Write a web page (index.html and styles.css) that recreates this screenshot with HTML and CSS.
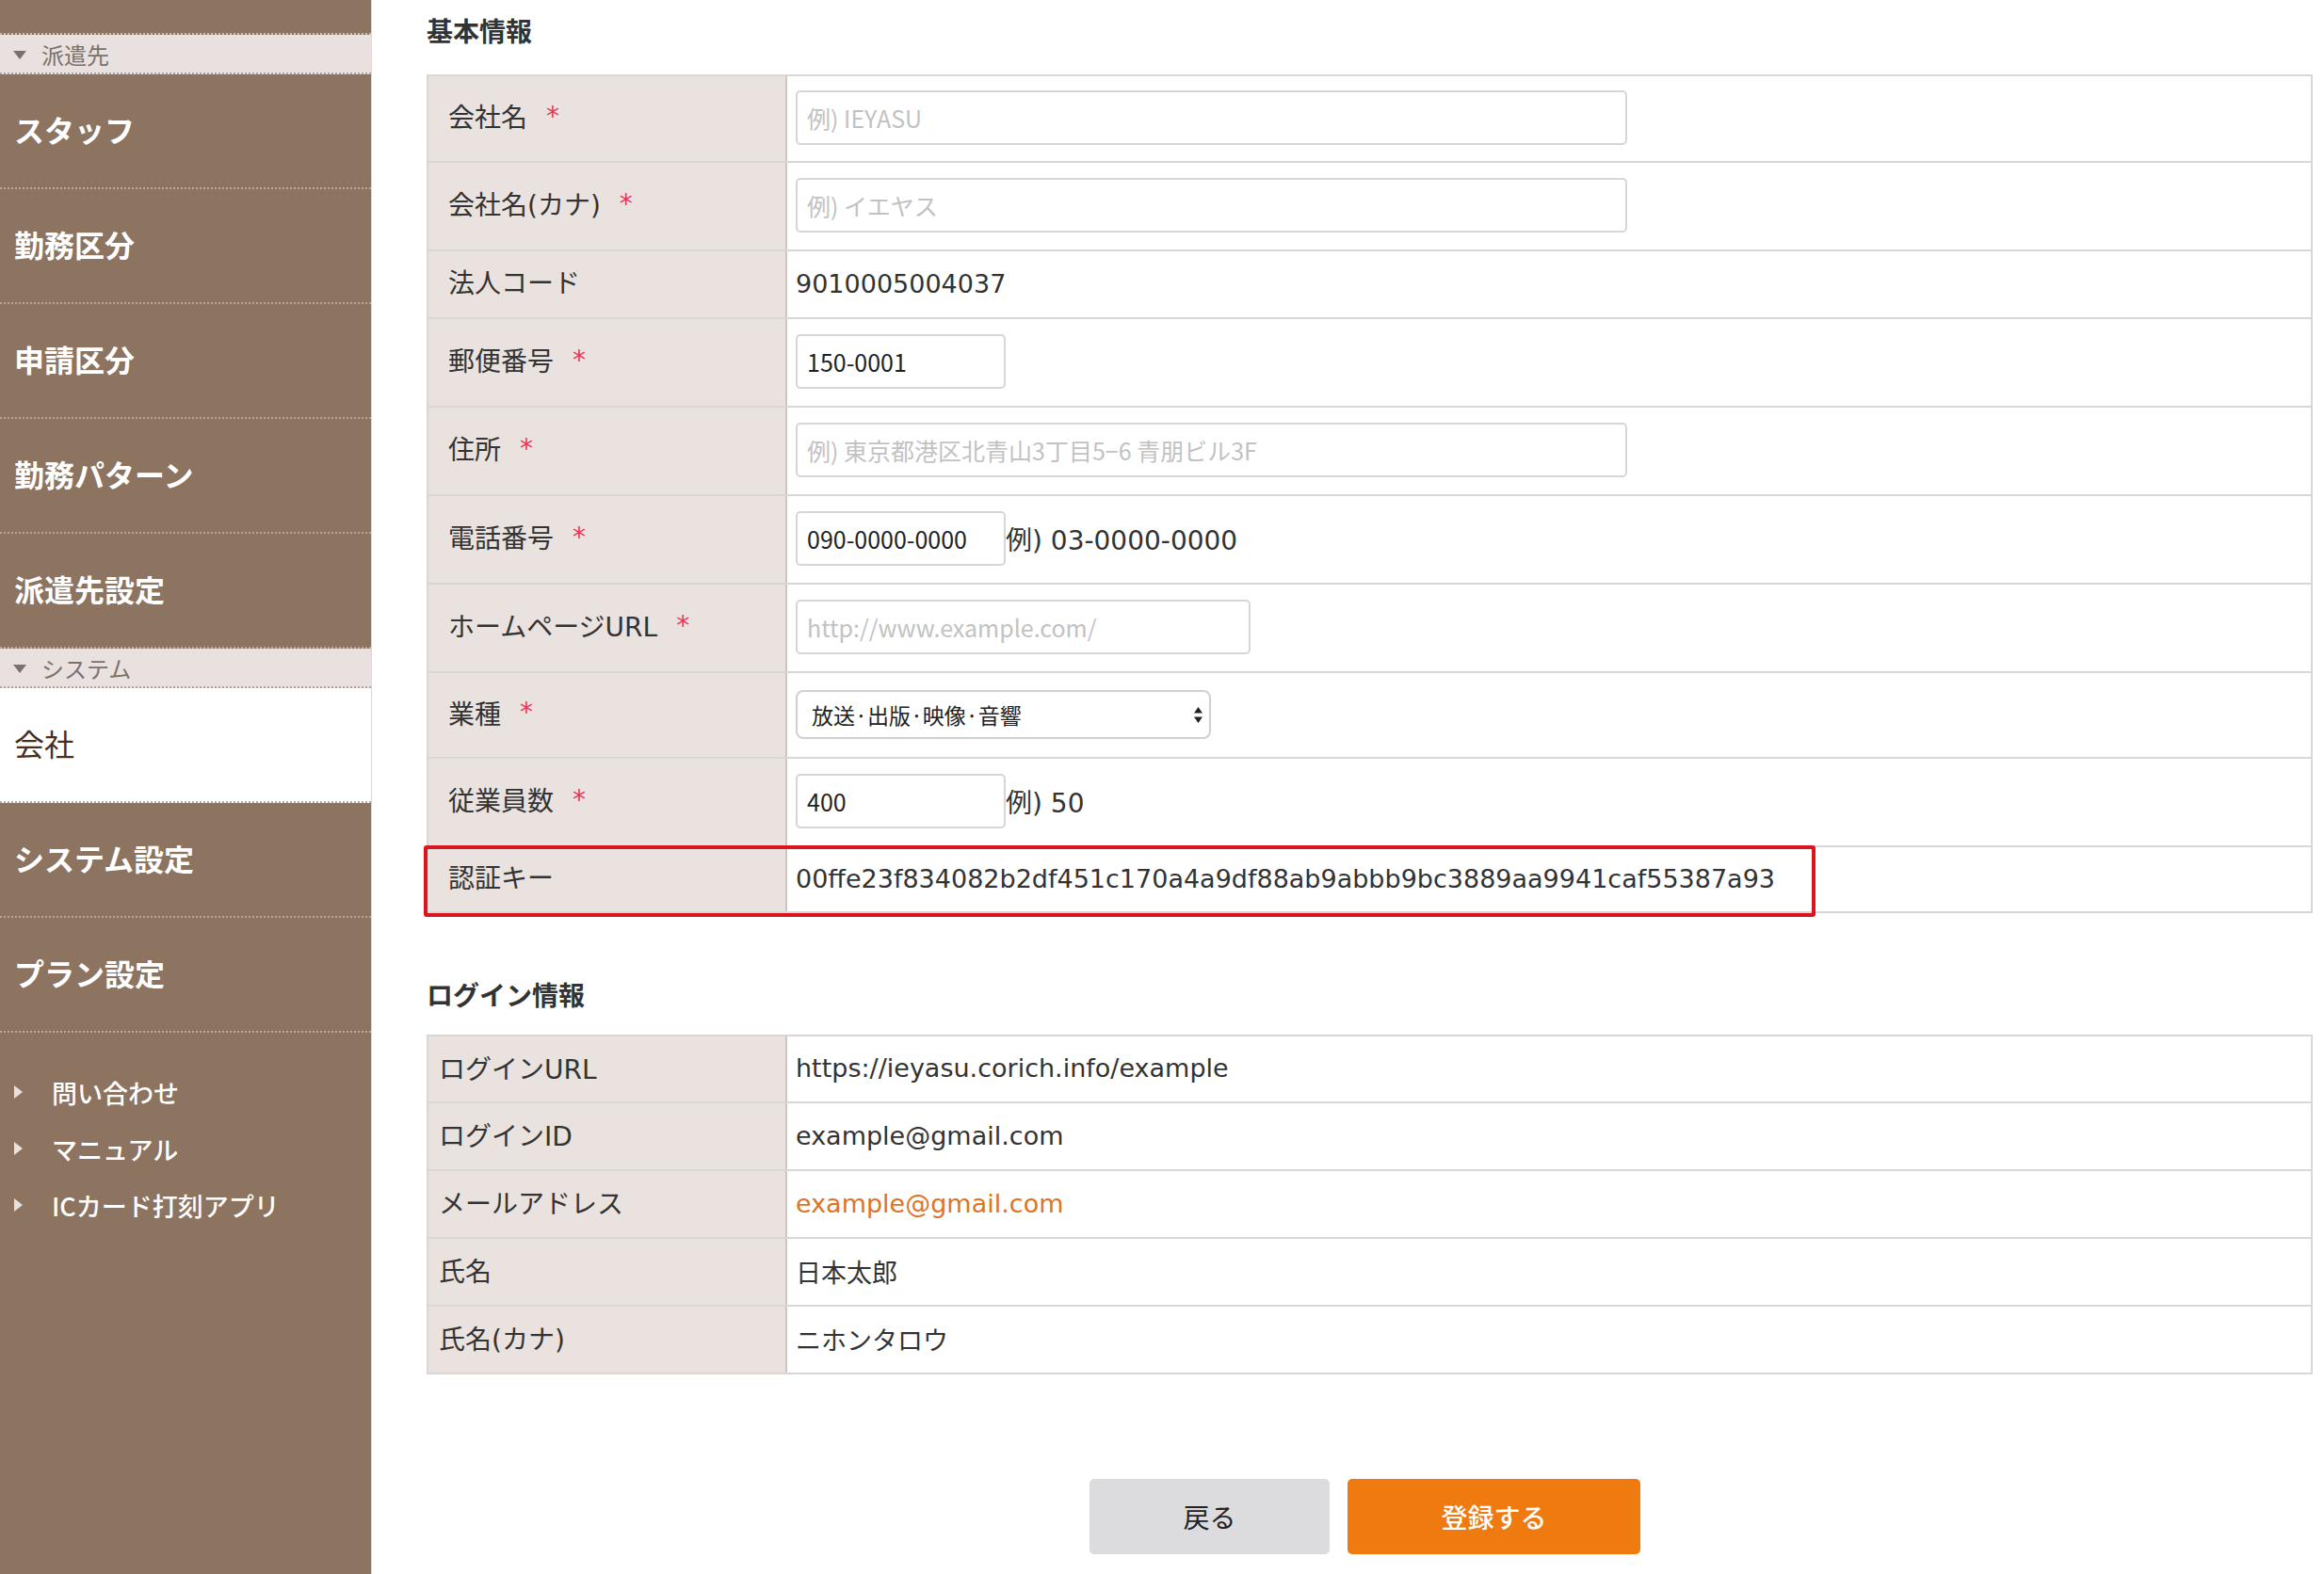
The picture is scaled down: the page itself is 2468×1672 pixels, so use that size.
FILE: index.html
```html
<!DOCTYPE html>
<html lang="ja">
<head>
<meta charset="utf-8">
<title>会社</title>
<link rel="stylesheet" href="styles.css">
</head>
<body>
<aside class="sidebar">
  <div class="sb-cut"></div>
  <div class="sb-head"><svg class="tri-down" width="14" height="9" viewBox="0 0 14 9"><polygon points="0,0 14,0 7,9"/></svg><span>派遣先</span></div>
  <a class="sb-item">スタッフ</a>
  <a class="sb-item">勤務区分</a>
  <a class="sb-item">申請区分</a>
  <a class="sb-item">勤務パターン</a>
  <a class="sb-item">派遣先設定</a>
  <div class="sb-head"><svg class="tri-down" width="14" height="9" viewBox="0 0 14 9"><polygon points="0,0 14,0 7,9"/></svg><span>システム</span></div>
  <a class="sb-item active">会社</a>
  <a class="sb-item">システム設定</a>
  <a class="sb-item">プラン設定</a>
  <ul class="sb-links">
    <li><svg class="tri-right" width="9" height="14" viewBox="0 0 9 14"><polygon points="0,0 9,7 0,14"/></svg><span>問い合わせ</span></li>
    <li><svg class="tri-right" width="9" height="14" viewBox="0 0 9 14"><polygon points="0,0 9,7 0,14"/></svg><span>マニュアル</span></li>
    <li><svg class="tri-right" width="9" height="14" viewBox="0 0 9 14"><polygon points="0,0 9,7 0,14"/></svg><span>ICカード打刻アプリ</span></li>
  </ul>
</aside>

<main class="main">
  <h2 class="sec-title">基本情報</h2>
  <div class="form-table">
    <div class="row first">
      <div class="lbl">会社名<span class="req">*</span></div>
      <div class="val"><input class="inp inp-l" type="text" placeholder="例) IEYASU"></div>
    </div>
    <div class="row">
      <div class="lbl">会社名(カナ)<span class="req">*</span></div>
      <div class="val"><input class="inp inp-l" type="text" placeholder="例) イエヤス"></div>
    </div>
    <div class="row short">
      <div class="lbl">法人コード</div>
      <div class="val">9010005004037</div>
    </div>
    <div class="row">
      <div class="lbl">郵便番号<span class="req">*</span></div>
      <div class="val"><input class="inp inp-s" type="text" value="150-0001"></div>
    </div>
    <div class="row">
      <div class="lbl">住所<span class="req">*</span></div>
      <div class="val"><input class="inp inp-l" type="text" placeholder="例) 東京都港区北青山3丁目5−6 青朋ビル3F"></div>
    </div>
    <div class="row">
      <div class="lbl">電話番号<span class="req">*</span></div>
      <div class="val"><input class="inp inp-s" type="text" value="090-0000-0000"><span class="hint">例) 03-0000-0000</span></div>
    </div>
    <div class="row">
      <div class="lbl">ホームページURL<span class="req">*</span></div>
      <div class="val"><input class="inp inp-m" type="text" placeholder="http://www.example.com/"></div>
    </div>
    <div class="row sel">
      <div class="lbl">業種<span class="req">*</span></div>
      <div class="val">
        <div class="sel-wrap">
          <select class="select"><option>放送·出版·映像·音響</option></select>
          <svg class="sel-arrows" width="9" height="17" viewBox="0 0 9 17"><polygon points="4.5,0 9,6.5 0,6.5"/><polygon points="0,10.5 9,10.5 4.5,17"/></svg>
        </div>
      </div>
    </div>
    <div class="row">
      <div class="lbl">従業員数<span class="req">*</span></div>
      <div class="val"><input class="inp inp-s" type="text" value="400"><span class="hint">例) 50</span></div>
    </div>
    <div class="row short key">
      <div class="lbl">認証キー</div>
      <div class="val">00ffe23f834082b2df451c170a4a9df88ab9abbb9bc3889aa9941caf55387a93</div>
    </div>
  </div>

  <h2 class="sec-title second">ログイン情報</h2>
  <div class="form-table login">
    <div class="row short first">
      <div class="lbl">ログインURL</div>
      <div class="val">https://ieyasu.corich.info/example</div>
    </div>
    <div class="row short">
      <div class="lbl">ログインID</div>
      <div class="val">example@gmail.com</div>
    </div>
    <div class="row short">
      <div class="lbl">メールアドレス</div>
      <div class="val"><a class="mail">example@gmail.com</a></div>
    </div>
    <div class="row short">
      <div class="lbl">氏名</div>
      <div class="val">日本太郎</div>
    </div>
    <div class="row short">
      <div class="lbl">氏名(カナ)</div>
      <div class="val">ニホンタロウ</div>
    </div>
  </div>

  <div class="actions">
    <button class="btn btn-back" type="button">戻る</button>
    <button class="btn btn-submit" type="button">登録する</button>
  </div>
</main>
</body>
</html>
```

FILE: styles.css
```css
* { box-sizing: border-box; }
html, body { margin: 0; padding: 0; }
body {
  display: flex;
  min-height: 1672px;
  background: #fff;
  color: #333;
  font-family: "DejaVu Sans", "Noto Sans CJK JP", sans-serif;
}

/* ---------- sidebar ---------- */
.sidebar {
  width: 395px;
  flex: none;
  background: #8c7461;
  border-right: 1px solid #ddd8d5;
  font-family: "Noto Sans CJK JP", sans-serif;
}
.sb-cut {
  height: 37px;
  border-bottom: 2px dotted #c9beb6;
}
.sb-head {
  height: 42px;
  background: #e9e1df;
  border-bottom: 2px dotted #b1a59d;
  display: flex;
  align-items: center;
  padding-left: 14px;
  font-size: 24px;
  color: #7b716b;
}
.tri-down { fill: #7b716b; margin-right: 16px; margin-top: 2px; }
.sb-item {
  display: flex;
  align-items: center;
  height: 122px;
  padding-left: 15px;
  padding-bottom: 5px;
  border-bottom: 2px dotted #b6a79c;
  color: #fff;
  font-size: 32px;
  font-weight: bold;
  text-decoration: none;
}
.sb-item.active {
  background: #fff;
  color: #4b2f1c;
  font-weight: normal;
}
.sb-links {
  list-style: none;
  margin: 0;
  padding: 33px 0 0 0;
}
.sb-links li {
  display: flex;
  align-items: center;
  height: 60px;
  padding-left: 15px;
  color: #fff;
  font-size: 27px;
  font-weight: 500;
}
.tri-right { fill: #e9e1dc; margin-right: 31px; }

/* ---------- main ---------- */
.main {
  flex: 1;
  padding: 0 12px 0 58px;
}
.sec-title {
  margin: 0;
  height: 79px;
  padding-top: 11px;
  font-family: "Noto Sans CJK JP", sans-serif;
  font-size: 28px;
  line-height: 42px;
  font-weight: bold;
  color: #333;
}
.sec-title.second {
  margin-top: 65px;
  height: 64px;
  padding-top: 0;
}

.form-table {
  border: 2px solid #dbd6d4;
  border-bottom: none;
}
.row {
  display: grid;
  grid-template-columns: 381px 1fr;
  height: 94px;
  border-bottom: 2px solid #dbd6d4;
}
.row.first { height: 92px; }
.row.short { height: 72px; }
.row.short.first { height: 71px; }
.row.sel { height: 91px; }
.row.key { height: 70px; position: relative; }
.row.key::after {
  content: "";
  position: absolute;
  left: -5px;
  top: -2px;
  width: 1470px;
  height: 68px;
  border: 4px solid #d8161d;
  border-radius: 3px;
  pointer-events: none;
}

.lbl {
  display: flex;
  align-items: center;
  background: #e9e2df;
  border-right: 2px solid #cdc5c1;
  padding-left: 21px;
  padding-bottom: 6px;
  font-size: 28px;
  color: #333;
}
.login .lbl { padding-left: 11px; padding-bottom: 4px; }
.req {
  color: #e8385f;
  margin-left: 20px;
  font-size: 28px;
}
.val {
  display: flex;
  align-items: center;
  padding-left: 9px;
  padding-bottom: 2px;
  font-size: 27px;
  color: #333;
}
.mail { color: #e07326; text-decoration: none; }
.hint { font-size: 28px; }

.inp {
  height: 58px;
  border: 2px solid #d6d6d6;
  border-radius: 5px;
  padding: 0 10px;
  font-family: "Noto Sans CJK JP", sans-serif;
  font-size: 25px;
  color: #222;
  background: #fff;
  outline: none;
}
.inp::placeholder { color: #c2c2c2; }
.inp-l { width: 883px; }
.inp-m { width: 483px; }
.inp-s { width: 223px; }

.sel-wrap {
  position: relative;
  width: 441px;
  height: 52px;
}
.select {
  width: 100%;
  height: 100%;
  appearance: none;
  -webkit-appearance: none;
  border: 2px solid #d0d0d0;
  border-radius: 8px;
  background: #fff;
  padding-left: 15px;
  font-family: "Noto Sans CJK JP", sans-serif;
  font-size: 23px;
  color: #222;
}
.sel-arrows {
  position: absolute;
  right: 9px;
  top: 18px;
  fill: #222;
}

/* ---------- buttons ---------- */
.actions {
  display: flex;
  justify-content: center;
  gap: 19px;
  margin-top: 111px;
  padding-right: 10px;
}
.btn {
  height: 80px;
  border: none;
  border-radius: 5px;
  font-family: "Noto Sans CJK JP", sans-serif;
  font-size: 28px;
  cursor: pointer;
}
.btn-back {
  width: 255px;
  background: #dcdcde;
  color: #222;
}
.btn-submit {
  width: 311px;
  background: #ee7a10;
  color: #fff;
  font-weight: 500;
}
```
